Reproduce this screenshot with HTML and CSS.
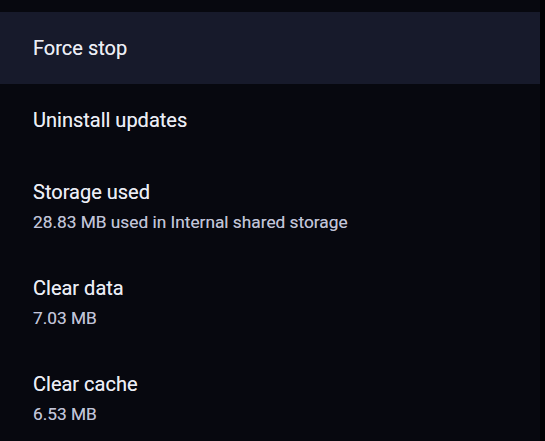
FILE: index.html
```html
<!DOCTYPE html>
<html lang="en">
<head>
<meta charset="utf-8">
<title>App info</title>
<link rel="stylesheet" href="styles.css">
</head>
<body>
<main class="screen">
  <ul class="list">
    <li class="item item--focused"><div class="title">Force stop</div></li>
    <li class="item"><div class="title">Uninstall updates</div></li>
    <li class="item"><div class="title">Storage used</div><div class="summary">28.83 MB used in Internal shared storage</div></li>
    <li class="item"><div class="title">Clear data</div><div class="summary">7.03 MB</div></li>
    <li class="item"><div class="title">Clear cache</div><div class="summary">6.53 MB</div></li>
  </ul>
</main>
</body>
</html>
```
FILE: styles.css
```css
html, body {
  margin: 0;
  padding: 0;
  background: #010103;
  height: 100%;
  overflow: hidden;
}
.screen {
  margin-right: 5px;
  min-height: 100%;
  background: #07080f;
  padding-top: 12px;
  box-sizing: border-box;
  font-family: Roboto, "Noto Sans", sans-serif;
}
.list {
  list-style: none;
  margin: 0;
  padding: 0;
}
.item {
  padding: 24px 20px 24px 33px;
}
.item--focused {
  background: #171a2b;
}
.title {
  font-size: 20px;
  line-height: 24px;
  color: #eceef6;
  text-shadow: 0 0 0.6px rgba(236, 238, 246, 0.6);
}
.summary {
  margin-top: 8px;
  margin-bottom: -4px;
  font-size: 17.3px;
  line-height: 20px;
  color: #c1c4d8;
  text-shadow: 0 0 0.6px rgba(193, 196, 216, 0.6);
}
```
